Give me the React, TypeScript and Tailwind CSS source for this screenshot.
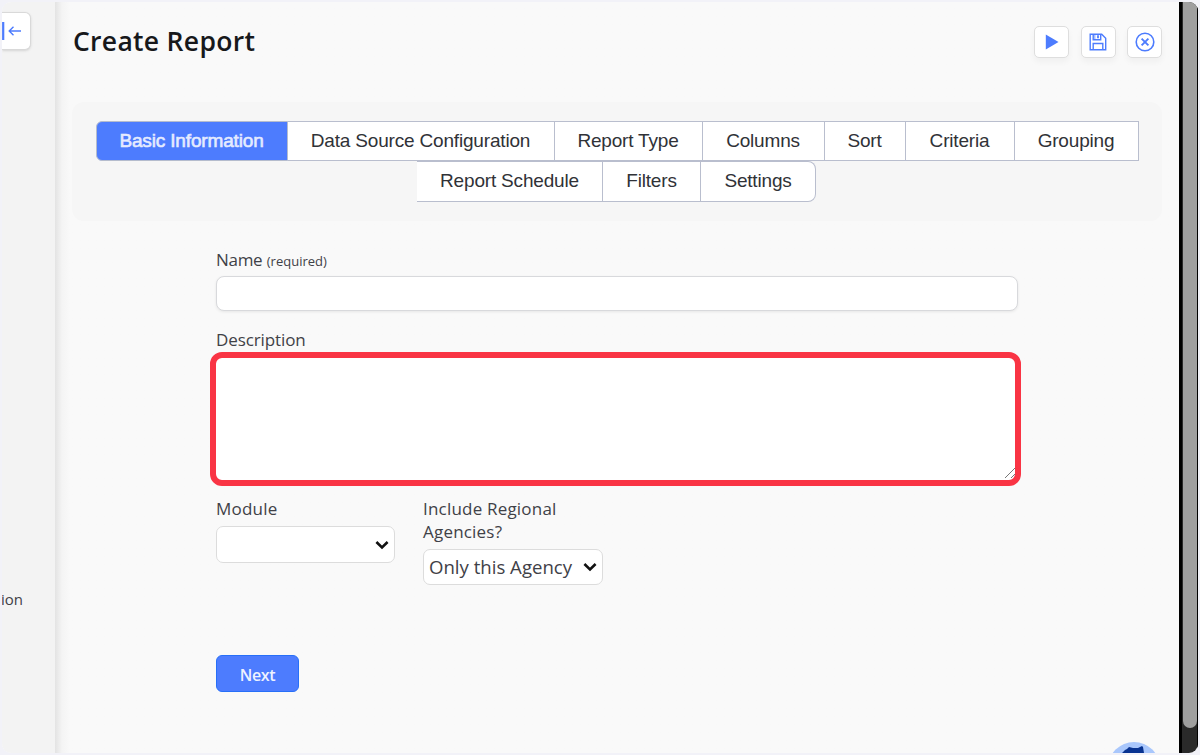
import type { ReactNode } from 'react';

const firstRow = [
  { label: 'Data Source Configuration', width: 'w-[267px]' },
  { label: 'Report Type', width: 'w-[148px]' },
  { label: 'Columns', width: 'w-[122px]' },
  { label: 'Sort', width: 'w-[81px]' },
  { label: 'Criteria', width: 'w-[109px]' },
  { label: 'Grouping', width: 'w-[124px]' },
];

function IconButton({ label, children }: { label: string; children: ReactNode }) {
  return (
    <button
      aria-label={label}
      className="flex h-8 w-[35px] items-center justify-center rounded-[5px] border border-[#dedede] bg-white text-[#4d7cfe] shadow-[0_4px_6px_rgba(0,0,0,0.04)]"
    >
      {children}
    </button>
  );
}

function Chevron() {
  return (
    <svg width="14" height="10" viewBox="0 0 14 10" fill="none" stroke="#111" strokeWidth="2.6">
      <path d="M1.4 2 7 7.4 12.6 2" />
    </svg>
  );
}

export default function App() {
  return (
    <div className="h-[755px] w-[1200px] bg-[#f2f2f8] p-0.5 font-['Open_Sans',sans-serif] text-[#3f4147]">
      <div className="flex h-[751px] overflow-hidden rounded-[9px] bg-[#f9f9f9]">
        <aside className="h-full w-[53px] shrink-0 bg-[#f3f3f3]">
          <button
            aria-label="Collapse"
            className="mt-[10px] flex h-[38px] w-[29px] items-center rounded-r-md border border-l-0 border-[#d9d9d9] bg-white text-[#4d7cfe] shadow-sm"
          >
            <svg width="20" height="20" viewBox="0 0 20 20" fill="none" stroke="currentColor">
              <path d="M1.2 1v18" strokeWidth="2.2" />
              <path d="M19 10H7.5M11.5 5.7 7.2 10l4.3 4.3" strokeWidth="1.4" />
            </svg>
          </button>
          <div className="-ml-px mt-[537px] text-[15px] leading-6 font-medium">ion</div>
        </aside>

        <main className="h-full w-[1124px] shrink-0 bg-linear-to-r from-[#e3e3e3] via-[#f4f4f4] via-[7px] to-[#f9f9f9] to-[15px] px-[17px]">
          <header className="flex h-[100px] justify-between pt-6">
            <h1 className="-mt-px pl-px text-[26.5px] leading-8 font-semibold tracking-[0.3px] text-[#17181b]">Create Report</h1>
            <div className="flex gap-[11.5px]">
              <IconButton label="Run">
                <svg width="14" height="16" viewBox="0 0 14 16" fill="currentColor">
                  <path d="M.8.5v15L13.5 8z" />
                </svg>
              </IconButton>
              <IconButton label="Save">
                <svg width="18" height="18" viewBox="0 0 18 18" fill="none" stroke="currentColor" strokeWidth="1.4">
                  <path d="M1.2 1.2h11.5l4 4v11.5H1.2zM4.2 1.2v5.6h7.5V1.2M4.2 16.7v-6.2h9.6v6.2" />
                  <path d="M5.5 1.5v5" strokeWidth="2" strokeOpacity=".5" />
                  <path d="M9 2.3v3" strokeWidth="1.8" />
                </svg>
              </IconButton>
              <IconButton label="Close">
                <svg width="20" height="20" viewBox="0 0 20 20" fill="none" stroke="currentColor" strokeWidth="1.6">
                  <circle cx="10" cy="10" r="8.8" />
                  <path d="m6.6 6.6 6.8 6.8m0-6.8-6.8 6.8" strokeWidth="1.9" />
                </svg>
              </IconButton>
            </div>
          </header>

          <nav className="h-[119px] rounded-xl bg-[#f6f6f6] pt-[19px] font-['Liberation_Sans',sans-serif] text-[19px] tracking-[-0.18px] text-[#303237]">
            <div className="ml-[23.5px] flex h-10">
              <button className="w-48 shrink-0 rounded-l-md border border-[#b5bccd] bg-[#4d7cfe] text-[#e5ebff]">
                <span className="tracking-[-0.15px] [-webkit-text-stroke:0.6px_#e5ebff]">Basic Information</span>
              </button>
              {firstRow.map((tab) => (
                <button key={tab.label} className={`${tab.width} shrink-0 border-y border-r border-[#b9bece] bg-white whitespace-nowrap`}>
                  {tab.label}
                </button>
              ))}
            </div>
            <div className="ml-[345px] flex h-[41px]">
              <button className="w-[186px] border-y border-r border-[#b9bece] bg-white pb-px">Report Schedule</button>
              <button className="w-[98px] border-y border-r border-[#b9bece] bg-white pb-px">Filters</button>
              <button className="w-[115px] rounded-r-lg border-y border-r border-[#b9bece] bg-white pb-px">Settings</button>
            </div>
          </nav>

          <form className="ml-[143px] w-[804px] pt-[27px] text-[17px] leading-[23px]">
            <label htmlFor="name" className="block pl-px">
              <span className="tracking-[-0.3px]">Name</span> <span className="text-[13px]">(required)</span>
            </label>
            <input
              id="name"
              className="mt-[3px] ml-px block h-[35px] w-[802px] rounded-lg border border-[#d8d9dc] bg-white shadow-[0_1px_3px_rgba(0,0,0,0.08)]"
            />
            <label htmlFor="description" className="mt-[17px] block pl-px tracking-[-0.1px]">Description</label>
            <div className="mt-px -ml-[5px] flex h-[134px] w-[811px] items-end justify-end rounded-xl border-[6px] border-[#f93444] bg-white">
              <textarea id="description" className="h-full min-w-0 flex-1 resize-none outline-none" />
              <svg className="mb-0.5" width="10" height="10" viewBox="0 0 10 10" fill="none" stroke="#777">
                <path d="M0 10 10 0M6 10l4-4" />
              </svg>
            </div>
            <div className="mt-[11px] flex gap-7">
              <div className="w-[180px] pl-px">
                <div className="tracking-[0.2px]">Module</div>
                <button type="button" aria-label="Module" className="mt-[6px] flex h-[37px] w-[179px] items-center justify-end rounded-[7px] border border-[#dcdcdc] bg-white pr-[5px]">
                  <Chevron />
                </button>
              </div>
              <div className="w-[180px]">
                <div className="tracking-[0.2px]">Include Regional Agencies?</div>
                <button type="button" className="mt-[6px] flex h-9 w-[180px] items-center justify-between rounded-[7px] border border-[#dcdcdc] bg-white pr-[5px] pl-[5px] text-[18.6px]">
                  <span className="pb-0.5 whitespace-nowrap">Only this Agency</span>
                  <Chevron />
                </button>
              </div>
            </div>
            <button type="button" className="mt-[70px] ml-px flex h-[37px] w-[83px] items-center justify-center rounded-md border border-[#276ff8] bg-[#4d7cfe] pt-0.5 text-base font-semibold tracking-[-0.4px] text-[#eef2ff]">
              Next
            </button>
          </form>

          <svg className="mt-[50px] ml-[1039px]" width="46" height="11" viewBox="0 0 46 11">
            <circle cx="23" cy="26" r="26" fill="#a9c7fc" />
            <path d="M11 11l3-3 2-1 2-2 4 1 5 0 4-2 1 1 1 6z" fill="#083391" />
          </svg>
        </main>

        <div className="h-full w-[19px] shrink-0 border-r border-l-[3px] border-black bg-[#2a2a2a] pl-px">
          <div className="h-[726px] rounded-b-full bg-[#9f9f9f]" />
        </div>
      </div>
    </div>
  );
}
